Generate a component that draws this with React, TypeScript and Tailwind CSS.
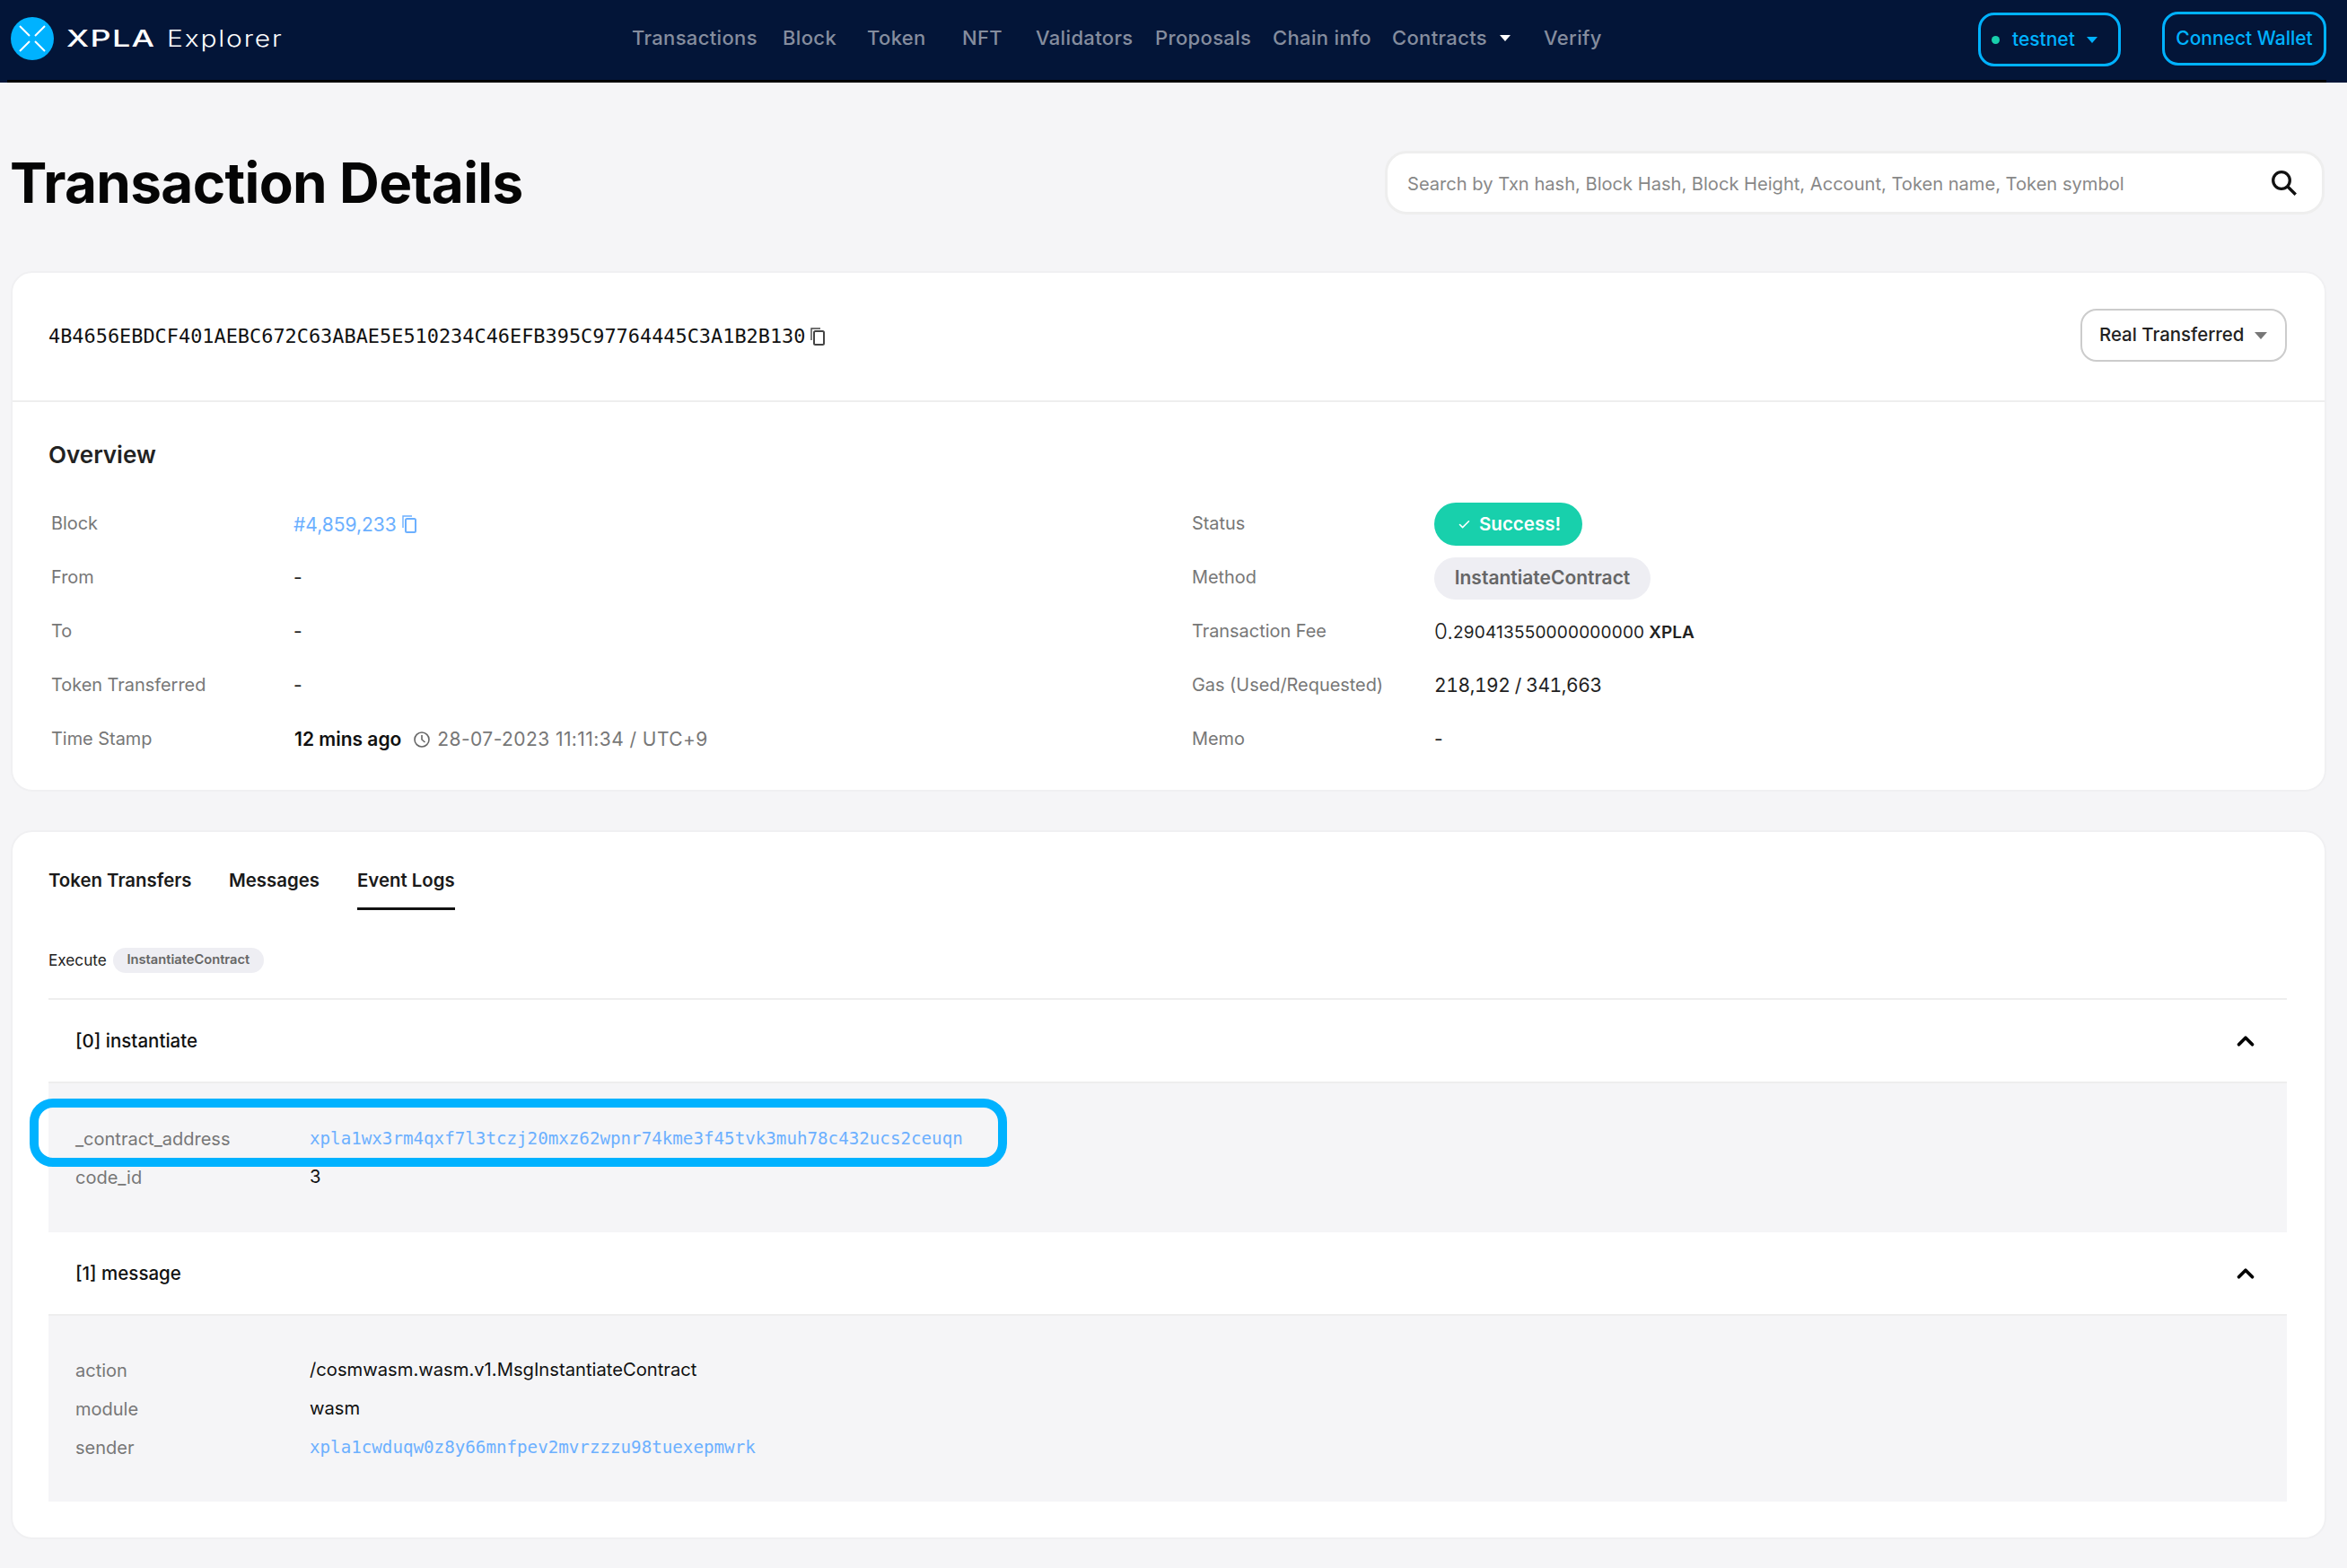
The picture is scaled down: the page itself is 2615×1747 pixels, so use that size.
import { Check, ChevronUp } from "lucide-react";

const INTER = "font-['Inter',sans-serif]";
const MONO = "font-['DejaVu_Sans_Mono',monospace]";

const navItems = [
  { label: "Transactions", className: "w-[168px]" },
  { label: "Block", className: "w-[94px]" },
  { label: "Token", className: "w-[106px]" },
  { label: "NFT", className: "w-[82px]" },
  { label: "Validators", className: "w-[133px]" },
  { label: "Proposals", className: "w-[131px]" },
  { label: "Chain info", className: "w-[133px]" },
];

function CopyIcon({ className }: { className: string }) {
  return (
    <svg className={className} viewBox="0 0 16 20" fill="none" stroke="currentColor">
      <path d="M1 14V1h10" strokeWidth="1.4" />
      <rect x="4" y="4" width="11" height="15" rx="1.5" strokeWidth="2" />
    </svg>
  );
}

function XplaMark() {
  return (
    <svg className="w-12 h-12 shrink-0" viewBox="0 0 48 48">
      <circle cx="24" cy="24" r="24" fill="#00b2ff" />
      <path
        d="M10 10l11 11M38 10L27 21M10 38l11-11M38 38L27 27"
        stroke="#fff"
        strokeWidth="2"
        fill="none"
      />
    </svg>
  );
}

function Caret({ className }: { className: string }) {
  return (
    <span
      className={`w-0 h-0 border-x-[6px] border-x-transparent border-t-[7px] ${className}`}
    />
  );
}

function Row({ label, children }: { label: string; children: React.ReactNode }) {
  return (
    <div className="h-[60px] flex items-center">
      <div className="w-[270px] shrink-0 text-[19.9px] text-[#777]">{label}</div>
      <div className="flex items-center text-[21px] text-[#222]">{children}</div>
    </div>
  );
}

function Pair({ label, children }: { label: string; children: React.ReactNode }) {
  return (
    <div className="h-[43px] flex items-center">
      <div className="w-[261px] shrink-0 text-[20px] text-[#777]">{label}</div>
      <div className="text-[20.2px] text-[#111]">{children}</div>
    </div>
  );
}

function Address({ children }: { children: string }) {
  return <span className={`${MONO} text-[19.2px] text-[#6cb0ff]`}>{children}</span>;
}

function LogHeader({ children }: { children: string }) {
  return (
    <div className="h-[93px] pl-[30px] pr-[31px] flex items-center justify-between border-b-2 border-[#eeeeee]">
      <span className="pt-[2px] text-[20.5px] font-medium text-[#111]">{children}</span>
      <ChevronUp className="w-[30px] h-[30px] text-black" strokeWidth={3} />
    </div>
  );
}

export default function App() {
  return (
    <div className={`min-h-[1747px] bg-[#f5f5f7] ${INTER}`}>
      {/* Header */}
      <div className="h-[92px] bg-[#031538] pl-2 pr-[23px]">
        <div className="h-full pl-1 pb-[3px] flex items-center border-b-[3px] border-black">
          <div className="flex items-center w-[692px]">
            <XplaMark />
            <span className="ml-[14px] w-[102px] text-[26px] font-medium text-white tracking-[1px] leading-none scale-x-[1.38] origin-left">
              XPLA
            </span>
            <span className="ml-[10px] text-[25px] font-light text-white tracking-[1.5px] leading-none scale-x-[1.2] origin-left">
              Explorer
            </span>
          </div>
          <nav className="flex items-center pb-[2px] text-[22px] font-medium text-[#858d9e] tracking-[0.35px]">
            {navItems.map((item) => (
              <span key={item.label} className={item.className}>
                {item.label}
              </span>
            ))}
            <span>Contracts</span>
            <Caret className="ml-[14px] border-t-white" />
            <span className="ml-[37px]">Verify</span>
          </nav>
          <div className="ml-auto flex items-center gap-[46px]">
            <button className="w-[159px] h-[60px] mt-[2px] rounded-[18px] border-[3px] border-[#00b2ff] flex items-center pl-[12px] text-[21px] font-medium text-[#00b2ff]">
              <span className="w-[9px] h-[9px] rounded-full bg-[#18d0ac]" />
              <span className="ml-[14px]">testnet</span>
              <Caret className="ml-[13px] border-t-[#00b2ff]" />
            </button>
            <button className="w-[183px] h-[60px] rounded-[18px] border-[3px] border-[#00b2ff] flex items-center justify-center text-[21px] font-medium text-[#00b2ff]">
              Connect Wallet
            </button>
          </div>
        </div>
      </div>

      <div className="pl-3 pr-[23px]">
        {/* Title + search */}
        <div className="h-[210px] pt-[13px] flex items-center justify-between">
          <h1 className="-ml-[1px] text-[62px] font-bold text-[#050505] tracking-[-0.65px]">
            Transaction Details
          </h1>
          <div className="w-[1047px] h-[71px] mr-[2px] bg-white rounded-[24px] border-[3px] border-[#eeeeee] flex items-center justify-between pl-[22px] pr-[24px]">
            <span className="pt-[3px] text-[20.1px] text-[#888]">
              Search by Txn hash, Block Hash, Block Height, Account, Token name, Token symbol
            </span>
            <svg className="w-9 h-9 text-[#111]" viewBox="0 0 24 24" fill="none" stroke="currentColor">
              <circle cx="10" cy="10" r="6.2" strokeWidth="2.2" />
              <path d="M14.5 14.5l6 6" strokeWidth="2.2" />
            </svg>
          </div>
        </div>

        {/* Overview card */}
        <div className="h-[580px] bg-white rounded-[24px] border-2 border-[#f0f0f2]">
          <div className="h-[144px] pl-[40px] pr-[42px] flex items-center justify-between border-b-2 border-[#eeeeee]">
            <div className="flex items-center text-[#111]">
              <span className={`${MONO} text-[21.9px]`}>
                4B4656EBDCF401AEBC672C63ABAE5E510234C46EFB395C97764445C3A1B2B130
              </span>
              <CopyIcon className="ml-[6px] w-4 h-5 text-[#444]" />
            </div>
            <button className="w-[230px] h-[59px] mb-[3px] rounded-[18px] border-2 border-[#cccccc] flex items-center pl-[19px] text-[20.4px] font-medium text-[#222]">
              Real Transferred
              <span className="ml-[12px] w-0 h-0 border-x-[7px] border-x-transparent border-t-[8px] border-t-[#777]" />
            </button>
          </div>
          <div className="pt-[39px] pl-[40px]">
            <h2 className="text-[26px] font-semibold text-[#222] leading-[40px]">Overview</h2>
            <div className="mt-[27px] pl-[3px] flex">
              <div className="w-[1271px] shrink-0">
                <Row label="Block">
                  <span className="pt-[2px] text-[#6cb0ff]">#4,859,233</span>
                  <CopyIcon className="ml-[6px] w-4 h-5 text-[#6cb0ff]" />
                </Row>
                <Row label="From">-</Row>
                <Row label="To">-</Row>
                <Row label="Token Transferred">-</Row>
                <Row label="Time Stamp">
                  <span className="ml-[1px] font-semibold text-[#111]">12 mins ago</span>
                  <svg className="ml-[13px] w-5 h-5 text-[#666]" viewBox="0 0 20 20" fill="none" stroke="currentColor" strokeWidth="1.6">
                    <circle cx="10" cy="10" r="8" />
                    <path d="M10 5v5l3.5 3" />
                  </svg>
                  <span className="ml-[7px] text-[#777] tracking-[0.43px]">28-07-2023 11:11:34 / UTC+9</span>
                </Row>
              </div>
              <div>
                <Row label="Status">
                  <span className="w-[165px] h-[48px] rounded-full bg-[#18d0ac] flex items-center pl-[26px] text-[20.5px] font-semibold text-white">
                    <Check className="w-[15px] h-[15px]" strokeWidth={2.5} />
                    <span className="ml-[9px]">Success!</span>
                  </span>
                </Row>
                <Row label="Method">
                  <span className="w-[241px] h-[47px] rounded-full bg-[#eeeef3] flex items-center justify-center text-[21px] font-semibold text-[#666]">
                    InstantiateContract
                  </span>
                </Row>
                <Row label="Transaction Fee">
                  <span className="text-[24px] font-light">0.</span>
                  <span className="pt-[2px] text-[19px] tracking-[0.2px]">290413550000000000</span>
                  <span className="ml-[5px] pt-[2px] text-[19px] font-semibold">XPLA</span>
                </Row>
                <Row label="Gas (Used/Requested)">
                  <span className="tabular-nums tracking-[-0.4px]">218,192 / 341,663</span>
                </Row>
                <Row label="Memo">-</Row>
              </div>
            </div>
          </div>
        </div>

        {/* Logs card */}
        <div className="mt-[43px] h-[790px] bg-white rounded-[24px] border-2 border-[#f0f0f2] pl-[40px] pr-[42px]">
          <div className="flex h-[97px] pt-[39px] text-[20.4px] font-semibold text-[#1a1a1a]">
            <span className="w-[201px]">Token Transfers</span>
            <span className="w-[143px]">Messages</span>
            <span className="h-[48px] border-b-[3px] border-[#111]">Event Logs</span>
          </div>
          <div className="h-[90px] pt-[3px] flex items-center gap-[7px] border-b-2 border-[#eeeeee]">
            <span className="text-[17.2px] text-[#222]">Execute</span>
            <span className="w-[168px] h-[28px] rounded-full bg-[#eeeef3] flex items-center justify-center text-[14.7px] font-semibold text-[#666]">
              InstantiateContract
            </span>
          </div>
          <LogHeader>[0] instantiate</LogHeader>
          <div className="relative h-[166px] bg-[#f5f5f7] pl-[30px] pt-[40px]">
            <Pair label="_contract_address">
              <Address>xpla1wx3rm4qxf7l3tczj20mxz62wpnr74kme3f45tvk3muh78c432ucs2ceuqn</Address>
            </Pair>
            <Pair label="code_id">3</Pair>
            <div className="absolute left-[-21px] top-[17px] w-[1089px] h-[76px] rounded-[26px] border-[10px] border-[#00b2ff]" />
          </div>
          <LogHeader>[1] message</LogHeader>
          <div className="h-[207px] bg-[#f5f5f7] pl-[30px] pt-[39px]">
            <Pair label="action">/cosmwasm.wasm.v1.MsgInstantiateContract</Pair>
            <Pair label="module">wasm</Pair>
            <Pair label="sender">
              <Address>xpla1cwduqw0z8y66mnfpev2mvrzzzu98tuexepmwrk</Address>
            </Pair>
          </div>
        </div>
      </div>
    </div>
  );
}
